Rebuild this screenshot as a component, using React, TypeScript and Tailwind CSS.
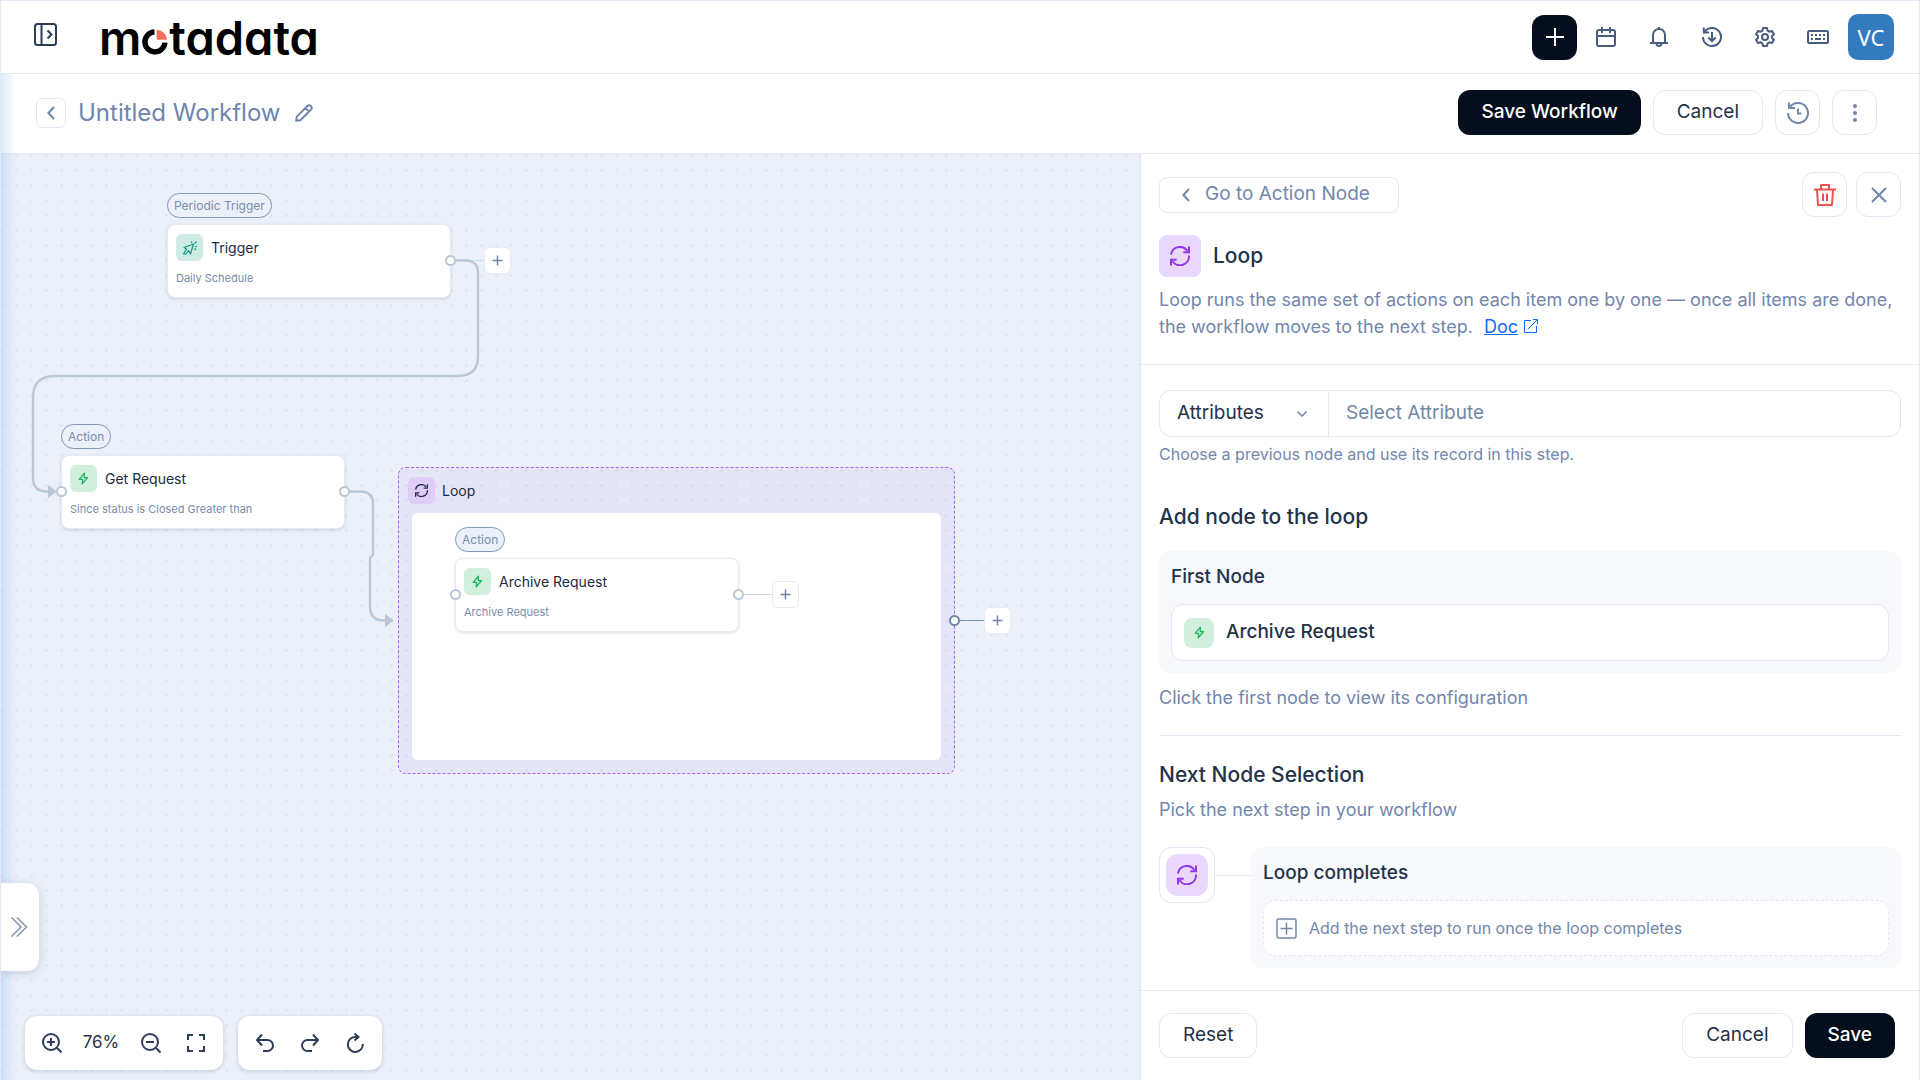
import { useState } from "react";
import type { ReactNode } from "react";

function Icon({ size, width, box, stroke = 2, className = "", children }: { size: number; width?: number; box?: string; stroke?: number; className?: string; children: ReactNode }) {
  return (
    <svg width={width ?? size} height={size} viewBox={box ?? `0 0 ${width ?? size} ${size}`} fill="none" stroke="currentColor"
      strokeWidth={stroke} aria-hidden="true" className={`shrink-0 ${className}`}>
      {children}
    </svg>
  );
}

function LoopIcon({ size = 20, stroke = 2 }: { size?: number; stroke?: number }) {
  return (
    <Icon size={size} box="0 0 20 20" stroke={stroke}>
      <path d="M1 8.5A9 9 0 0 1 17.4 5" />
      <path d="M19 0.5V6.3H13.3" />
      <path d="M19 9.5A9 9 0 0 1 2.4 15" />
      <path d="M1 19.5V13.7H6.7" />
    </Icon>
  );
}

function ZapIcon() {
  return (
    <Icon size={13} width={11} box="0 0 11 13" stroke={1.3}>
      <path d="M6.4 1.2L1.2 7.4H4.6L4.2 11.8L9.6 5.6H6.2Z" strokeLinejoin="round" />
    </Icon>
  );
}

function ChevronLeft({ size = 14 }: { size?: number }) {
  return (
    <Icon size={size} width={8} box="0 0 8 14">
      <path d="M7 1L1.4 7L7 13" />
    </Icon>
  );
}

function PlusBox({ label, className }: { label: string; className: string }) {
  return (
    <button aria-label={label} className={`absolute flex size-[27px] items-center justify-center rounded-md border border-[#e6eaf4] bg-white text-[#7086ab] ${className}`}>
      <Icon size={11} stroke={1.5}><path d="M5.5 0.5V10.5M0.5 5.5H10.5" /></Icon>
    </button>
  );
}

function Handle({ className }: { className: string }) {
  return <span className={`absolute size-[11px] rounded-full border-2 bg-white ${className}`} />;
}

function NodeCard({ tag, title, detail, icon, iconClass, hasInput, className }: { tag: string; title: string; detail: string; icon: ReactNode; iconClass: string; hasInput?: boolean; className: string }) {
  return (
    <div className={`absolute flex w-[284px] flex-col items-start gap-1.5 ${className}`}>
      <span className="flex h-[25px] items-center rounded-full border border-[#8295b8] bg-[#ebf0f9] px-1.5 text-xs text-[#7a8dab]">{tag}</span>
      <div className="relative flex h-[74px] w-full flex-col gap-[9px] rounded-lg border border-[#e6eaf4] bg-white px-2 pt-[9px] shadow-[0_1px_3px_rgba(40,60,100,0.16)]">
        <div className="flex items-center gap-2">
          <span className={`flex size-[27px] items-center justify-center rounded-md ${iconClass}`}>{icon}</span>
          <span className="text-sm text-[#1c2a42]">{title}</span>
        </div>
        <p className="text-[11px] leading-4 text-[#7a8bab]">{detail}</p>
        {hasInput && <Handle className="-left-1.5 top-[30px] border-[#b9c7d6]" />}
        <Handle className="-right-1.5 top-[30px] border-[#b9c7d6]" />
      </div>
    </div>
  );
}

function Header() {
  return (
    <header className="flex h-[74px] shrink-0 items-center border border-[#e2e7f3] bg-white pl-[33px] pr-[25px]">
      <button aria-label="Expand sidebar" className="mb-1.5 text-[#2c3d58]">
        <Icon size={23}>
          <rect x="1" y="1" width="21" height="21" rx="2.5" />
          <path d="M7.5 1V22M13.5 7.5L17.5 11.5L13.5 15.5" />
        </Icon>
      </button>
      <a href="#" aria-label="motadata" className="ml-[42px] flex h-[72px] items-center text-[47px] leading-[47px] font-semibold text-black [font-feature-settings:'cv11']">
        m
        <Icon size={26} box="0 0 26 26" stroke={5.4} className="mx-px mt-2.5">
          <path d="M12.4 2.9A10 10 0 1 0 22.9 13.6" />
          <path d="M14.7 0.7A10.5 10.5 0 0 1 25 10.7H14.7Z" fill="#f4705c" stroke="none" />
        </Icon>
        tadata
      </a>
      <nav className="ml-auto flex items-center text-[#4a5c80]">
        <button aria-label="Create" className="flex size-[45px] items-center justify-center rounded-xl bg-[#050e1c] text-white">
          <Icon size={18}><path d="M9 0V18M0 9H18" /></Icon>
        </button>
        <button aria-label="Calendar" className="ml-0.5 flex h-[45px] w-[53px] items-center justify-center">
          <Icon size={20}>
            <rect x="1" y="3" width="18" height="16" rx="2" />
            <path d="M1 9H19M6 0V6M14 0V6" />
          </Icon>
        </button>
        <button aria-label="Notifications" className="flex h-[45px] w-[53px] items-center justify-center">
          <Icon size={20} width={18}>
            <path d="M0 16H18M3 16V8A6 6 0 0 1 15 8V16M9 0V2" />
            <path d="M6.5 16.5A2.5 2.5 0 0 0 11.5 16.5" />
          </Icon>
        </button>
        <button aria-label="Downloads" className="flex h-[45px] w-[53px] items-center justify-center">
          <Icon size={20}>
            <path d="M1 10A9 9 0 1 0 2.8 4.6M1.8 0.5V5.5H7M10 5V14.5M6.3 10.5L10 14.2L13.7 10.5" />
          </Icon>
        </button>
        <button aria-label="Settings" className="flex h-[45px] w-[53px] items-center justify-center">
          <Icon size={20}>
            <path strokeLinejoin="round" d="M8 1H12L12.6 3.7L14.3 4.7L17 3.9L19 7.3L17 9.1V10.9L19 12.7L17 16.1L14.3 15.3L12.6 16.3L12 19H8L7.4 16.3L5.7 15.3L3 16.1L1 12.7L3 10.9V9.1L1 7.3L3 3.9L5.7 4.7L7.4 3.7Z" />
            <circle cx="10" cy="10" r="3" />
          </Icon>
        </button>
        <button aria-label="Keyboard shortcuts" className="flex h-[45px] w-[53px] items-center justify-center">
          <Icon size={14} width={22}>
            <rect x="1" y="1" width="20" height="12" rx="1.5" />
            <path d="M4 5H6M8 5H10M12 5H14M16 5H18M4 9H6M8 9H14M16 9H18" />
          </Icon>
        </button>
        <button className="ml-1 size-[46px] rounded-[10px] bg-[#337abf] font-['Noto_Sans',sans-serif] text-[22px] text-white">VC</button>
      </nav>
    </header>
  );
}

function WorkflowBar() {
  const square = "flex size-[45px] items-center justify-center rounded-xl border border-[#e2e7f3] bg-white text-[#7086ab]";
  return (
    <div className="flex h-20 shrink-0 items-center border-b border-[#e2e7f3] pb-0.5 pl-[35px] pr-[42px]">
      <button aria-label="Back" className="flex size-[30px] items-center justify-center rounded-md border border-[#e2e7f3] bg-white text-[#7086ab]">
        <ChevronLeft />
      </button>
      <h1 className="ml-3 text-2xl text-[#6e86ad]">Untitled Workflow</h1>
      <button aria-label="Rename workflow" className="ml-3.5 text-[#6e86ad]">
        <Icon size={18}>
          <path strokeLinejoin="round" d="M1.2 16.8L1.8 12.6L12.4 2A2.5 2.5 0 0 1 16 5.6L5.4 16.2ZM10.4 4L14 7.6" />
        </Icon>
      </button>
      <div className="ml-auto flex gap-3 text-[19px]">
        <button className="h-[45px] rounded-xl bg-[#050e1c] px-[23px] font-medium text-white">Save Workflow</button>
        <button className="h-[45px] rounded-xl border border-[#e2e7f3] bg-white px-[23px] text-[#24324a]">Cancel</button>
        <button aria-label="Version history" className={square}>
          <Icon size={22}><path d="M1 11A10 10 0 1 0 3.3 4.6M2 0.5V6H8M11 6.5V11.5H14.5" /></Icon>
        </button>
        <button aria-label="More options" className={square}>
          <Icon size={18} width={4} stroke={0}>
            <g fill="currentColor"><circle cx="2" cy="2" r="2" /><circle cx="2" cy="9" r="2" /><circle cx="2" cy="16" r="2" /></g>
          </Icon>
        </button>
      </div>
    </div>
  );
}

function Edges() {
  return (
    <svg className="absolute left-0 top-0 h-full w-full" fill="none" stroke="#b9c7d6" strokeWidth="2.4" aria-hidden="true">
      <path d="M470 106.5H484" strokeWidth="1" stroke="#d5deea" />
      <path d="M454 106.5H464Q477 106.5 477 119V202Q477 222 457 222H54Q32 222 32 244V324Q32 337.5 46 337.5H48" />
      <path d="M348 337.5H359Q372 337.5 372 350V401L369 404V452Q369 466.5 383 466.5H386" />
      <path d="M47 331L56 337.5L47 344ZM384 460L393 466.5L384 473Z" fill="#b9c7d6" stroke="none" />
      <path d="M958 466.5H984" strokeWidth="1" stroke="#7f93b6" />
    </svg>
  );
}

function Canvas() {
  const tool = "flex h-[54px] w-[45px] items-center justify-center";
  const [zoom, setZoom] = useState(76);

  return (
    <main className="relative min-w-0 flex-1 overflow-hidden bg-[#ebf0f9] bg-[conic-gradient(from_270deg_at_3px_3px,#e2e7f3_90deg,transparent_0)] bg-[size:15px_15px] bg-[position:14px_0]">
      <Edges />
      <NodeCard className="left-[166px] top-[39px]" tag="Periodic Trigger" title="Trigger" detail="Daily Schedule" iconClass="bg-[#cfebe6] text-[#16968a]"
        icon={
          <Icon size={16} stroke={1.2}>
            <path strokeLinejoin="round" d="M11.5 4L8.5 14L6.5 10.5L4 14H1.5L4.5 9L2 7.5Z" />
            <path d="M9.5 3V1.5M12.5 3.5L14.5 1.5M13 6.5H15M12.5 8.5L14 10" />
          </Icon>
        } />
      <PlusBox label="Add node after Trigger" className="left-[483px] top-[93px]" />
      <NodeCard className="left-[60px] top-[270px]" hasInput tag="Action" title="Get Request" detail="Since status is Closed Greater than" iconClass="bg-[#d1efdd] text-[#1db35b]" icon={<ZapIcon />} />

      {/* Loop container with its own inner canvas */}
      <section className="absolute left-[397px] top-[313px] flex h-[307px] w-[557px] flex-col rounded-lg border border-dashed border-[#b060f0] bg-[#a860ec]/8 px-[13px] pb-[13px] pt-[9px]">
        <div className="-ml-1 flex items-center gap-[7px]">
          <span className="flex size-[27px] items-center justify-center rounded-md bg-[#dfcdf7] text-[#24324a]"><LoopIcon size={13} stroke={2} /></span>
          <span className="text-sm text-[#1c2a42]">Loop</span>
        </div>
        <div className="relative mt-[9px] flex-1 rounded-md bg-white">
          <span className="absolute left-[330px] top-[81px] h-px w-8 bg-[#c9d5e3]" />
          <NodeCard className="left-[43px] top-[14px]" hasInput tag="Action" title="Archive Request" detail="Archive Request" iconClass="bg-[#d1efdd] text-[#1db35b]" icon={<ZapIcon />} />
          <PlusBox label="Add node after Archive Request" className="left-[360px] top-[68px]" />
        </div>
        <Handle className="-right-1.5 top-[147px] border-[#7086ab]" />
      </section>
      <PlusBox label="Add node after Loop" className="left-[983px] top-[453px]" />

      <button aria-label="Open node list" className="absolute bottom-[109px] left-0 z-10 flex h-[88px] w-[38px] items-center rounded-r-xl bg-white pl-2.5 text-[#7f93b0] shadow-[0_2px_10px_rgba(40,60,100,0.18)]">
        <Icon size={20} width={17} stroke={1.5}><path d="M0.5 0.5L10 10L0.5 19.5M6 0.5L15.5 10L6 19.5" /></Icon>
      </button>

      <div className="absolute bottom-2.5 left-6 flex gap-[15px] text-[#2c3d58]">
        <div className="flex rounded-xl bg-white pl-1 pr-[5px] shadow-[0_1px_4px_rgba(40,60,100,0.22)]">
          <button aria-label="Zoom in" className={tool} onClick={() => setZoom((z) => Math.min(z + 5, 200))}>
            <Icon size={20}><circle cx="9" cy="9" r="8" /><path d="M9 5V13M5 9H13M15 15L19.5 19.5" /></Icon>
          </button>
          <span className="flex w-[54px] items-center justify-center text-[17px] text-[#24324a]">{zoom}%</span>
          <button aria-label="Zoom out" className={tool} onClick={() => setZoom((z) => Math.max(z - 5, 10))}>
            <Icon size={20}><circle cx="9" cy="9" r="8" /><path d="M5 9H13M15 15L19.5 19.5" /></Icon>
          </button>
          <button aria-label="Fit to screen" className={tool}>
            <Icon size={18}><path d="M1 6V1H6M12 1H17V6M17 12V17H12M6 17H1V12" /></Icon>
          </button>
        </div>
        <div className="flex rounded-xl bg-white pl-1 pr-[5px] shadow-[0_1px_4px_rgba(40,60,100,0.22)]">
          <button aria-label="Undo" className={tool}>
            <Icon size={18}><path strokeLinejoin="round" d="M6 0.5L1 6L6 11.5M1 6H11.5A5.5 5.5 0 0 1 11.5 17H7" /></Icon>
          </button>
          <button aria-label="Redo" className={tool}>
            <Icon size={18}><path strokeLinejoin="round" d="M12 0.5L17 6L12 11.5M17 6H6.5A5.5 5.5 0 0 0 6.5 17H11" /></Icon>
          </button>
          <button aria-label="Reset canvas" className={tool}>
            <Icon size={20} width={18}><path d="M12 4H9A7.5 7.5 0 1 0 16.8 11M8.5 0.5L12.5 4L8.5 7.5" /></Icon>
          </button>
        </div>
      </div>
    </main>
  );
}

function LoopPanel() {
  const square = "flex size-[45px] items-center justify-center rounded-xl border border-[#e2e7f3] bg-white";
  const [source, setSource] = useState("Attributes");
  const [attribute, setAttribute] = useState("");

  return (
    <aside className="flex w-[780px] shrink-0 flex-col border-l-2 border-[#e2e7f3] bg-white">
      <div className="border-b border-[#e2e7f3] px-[18px] pb-6 pt-[18px]">
        <div className="flex items-center">
          <button className="flex h-9 items-center gap-[15px] rounded-lg border border-[#e2e7f3] pl-[22px] pr-7 text-[19px] text-[#7386ab]">
            <ChevronLeft />
            Go to Action Node
          </button>
          <button aria-label="Delete node" className={`ml-auto text-[#ef5350] ${square}`}>
            <Icon size={22}><path strokeLinejoin="round" d="M0 5.5H22M3 5.5L4 21H18L19 5.5M7 5V1H15V5M9 9.5V17M13 9.5V17" /></Icon>
          </button>
          <button aria-label="Close" className={`ml-[9px] text-[#7086ab] ${square}`}>
            <Icon size={16}><path d="M1 1L15 15M15 1L1 15" /></Icon>
          </button>
        </div>
        <div className="mt-[18px] flex items-center gap-3">
          <span className="flex size-[42px] items-center justify-center rounded-lg bg-[#e9d7fc] text-[#9333ea]"><LoopIcon /></span>
          <h2 className="text-[21px] leading-7 font-medium text-[#24324a]">Loop</h2>
        </div>
        <p className="mt-[9px] text-lg leading-[27px] text-[#7386ab]">
          Loop runs the same set of actions on each item one by one — once all items are done, the workflow moves to the next step.
          <a href="#" className="ml-[11px] text-[#0a6cff] underline">
            Doc
            <Icon size={14} stroke={1} className="ml-1.5 inline align-baseline"><path d="M7 1.5H0.5V13.5H12.5V7M4 10L13 1M9 0.5H13.5V5" /></Icon>
          </a>
        </p>
      </div>

      <div className="min-h-0 flex-1 overflow-hidden px-[18px] pt-[25px]">
        <div className="flex h-[47px] rounded-xl border border-[#e2e7f3]">
          <div className="relative flex w-[169px] items-center border-r border-[#e2e7f3] text-[#7086ab]">
            <select aria-label="Value source" value={source} onChange={(e) => setSource(e.target.value)}
              className="h-full w-full appearance-none bg-transparent pl-[17px] text-[19px] text-[#24324a] outline-none">
              <option>Attributes</option>
              <option>Variables</option>
            </select>
            <Icon size={6} width={10} stroke={1.5} className="pointer-events-none absolute right-[21px]"><path d="M0.5 0.5L5 5L9.5 0.5" /></Icon>
          </div>
          <input aria-label="Attribute" value={attribute} onChange={(e) => setAttribute(e.target.value)} placeholder="Select Attribute"
            className="min-w-0 flex-1 px-[17px] text-[19px] text-[#24324a] outline-none placeholder:text-[#7386a8]" />
        </div>
        <p className="mt-[5px] text-base leading-6 text-[#7386ab]">Choose a previous node and use its record in this step.</p>

        <h3 className="mt-[37px] text-[21px] leading-7 font-medium text-[#24324a]">Add node to the loop</h3>
        <div className="mt-5 rounded-xl bg-[#f8f9fd] p-3">
          <h4 className="text-[19px] leading-7 font-medium text-[#24324a]">First Node</h4>
          <button className="mt-[13px] flex h-[57px] w-full items-center gap-3 rounded-xl border border-[#e2e7f3] bg-white px-3 text-[19px] font-medium text-[#24324a]">
            <span className="flex size-[30px] items-center justify-center rounded-lg bg-[#d1efdd] text-[#1db35b]"><ZapIcon /></span>
            Archive Request
          </button>
        </div>
        <p className="mt-[11px] text-lg leading-[27px] text-[#7386ab]">Click the first node to view its configuration</p>

        <div className="mt-6 border-t border-[#e2e7f3] pt-[25px]">
          <h3 className="text-[21px] leading-7 font-medium text-[#24324a]">Next Node Selection</h3>
          <p className="mt-[7px] text-lg leading-[27px] text-[#7386ab]">Pick the next step in your workflow</p>
          <div className="mt-6 flex items-start">
            <span className="flex size-14 shrink-0 items-center justify-center rounded-xl border border-[#e2e7f3]">
              <span className="flex size-[42px] items-center justify-center rounded-xl bg-[#e9d7fc] text-[#9333ea]"><LoopIcon /></span>
            </span>
            <span className="mt-7 h-px w-9 bg-[#e2e7f3]" />
            <div className="min-w-0 flex-1 rounded-xl bg-[#f8f9fd] p-3">
              <h4 className="text-[19px] leading-7 font-medium text-[#24324a]">Loop completes</h4>
              <button className="mt-[13px] flex h-[56px] w-full items-center gap-3 rounded-xl border border-dashed border-[#e2e7f3] bg-white px-3 text-base text-[#7386a8]">
                <Icon size={21} stroke={1.5}><rect x="1" y="1" width="19" height="19" rx="1.5" /><path d="M10.5 4.5V16.5M4.5 10.5H16.5" /></Icon>
                Add the next step to run once the loop completes
              </button>
            </div>
          </div>
        </div>
      </div>

      <footer className="flex shrink-0 items-center gap-3 border-t border-[#e2e7f3] py-[22px] pl-[18px] pr-6 text-[19px] text-[#24324a]">
        <button className="h-[45px] rounded-xl border border-[#e2e7f3] px-[23px]">Reset</button>
        <button className="ml-auto h-[45px] rounded-xl border border-[#e2e7f3] px-[23px]">Cancel</button>
        <button className="h-[45px] rounded-xl bg-[#050e1c] px-[23px] font-medium text-white">Save</button>
      </footer>
    </aside>
  );
}

export default function App() {
  return (
    <div className="flex h-screen flex-col overflow-hidden bg-white font-['Inter',sans-serif]">
      <Header />
      <div className="relative flex min-h-0 flex-1 flex-col border-x border-[#e2e7f3]">
        <WorkflowBar />
        <div className="flex min-h-0 flex-1">
          <Canvas />
          <LoopPanel />
        </div>
        <div className="pointer-events-none absolute inset-y-0 left-0 w-[14px] bg-linear-to-r from-[#4f9be0]/20 to-transparent" />
      </div>
    </div>
  );
}
